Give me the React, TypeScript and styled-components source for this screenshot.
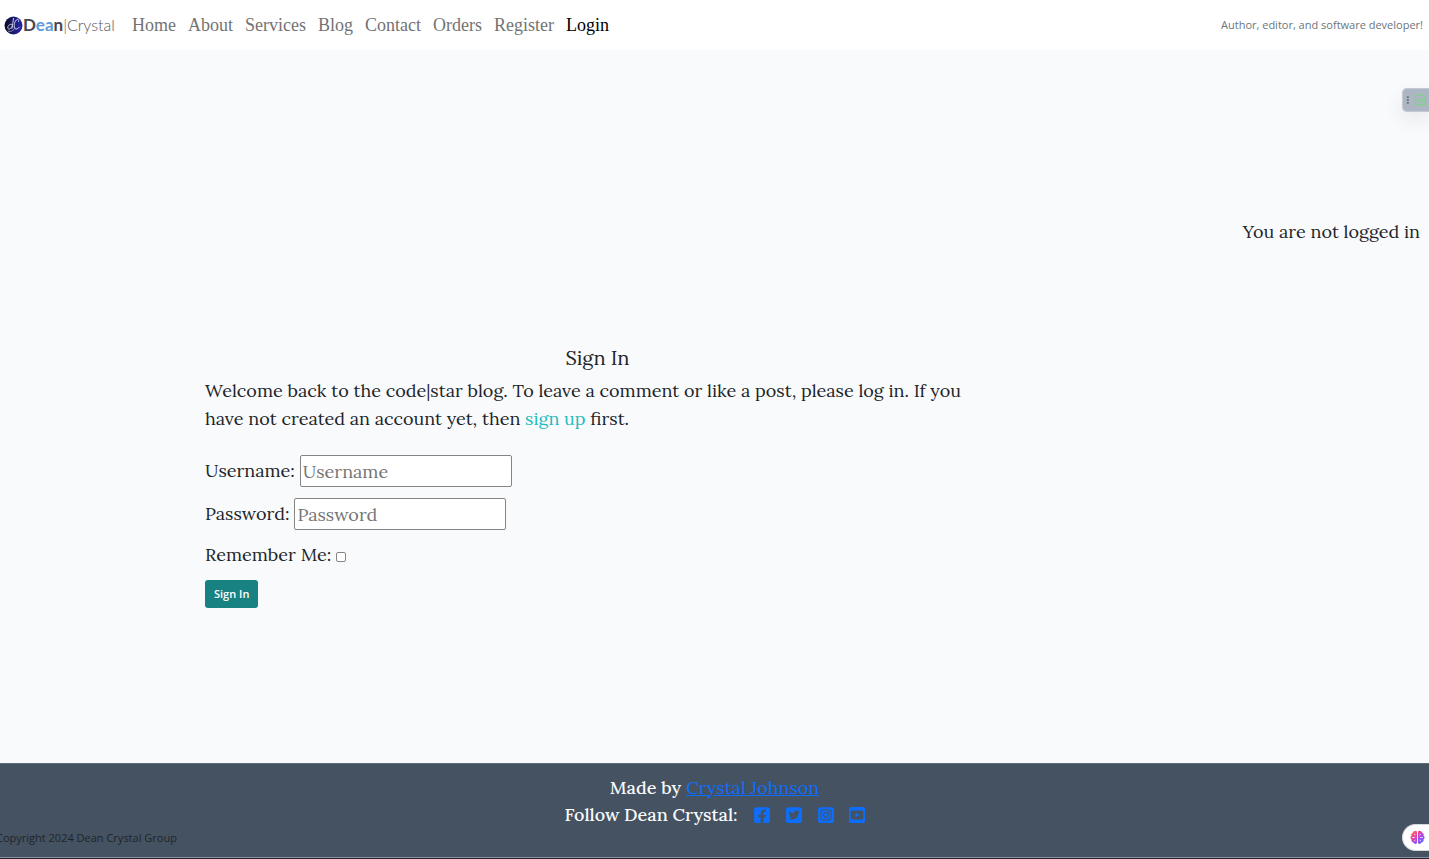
import React from "react";
import styled, { createGlobalStyle } from "styled-components";
import {
  FaFacebookSquare,
  FaTwitterSquare,
  FaInstagramSquare,
} from "react-icons/fa";

const serif = `Lora, "Liberation Serif", serif`;
const sans = `"Segoe UI", "Open Sans", sans-serif`;

const GlobalStyle = createGlobalStyle`
  *, *::before, *::after { box-sizing: border-box; }
  body {
    margin: 0;
    background: #f9fafc;
    color: #212529;
    font-family: ${serif};
    font-size: 18px;
  }
`;

const Page = styled.div`
  display: flex;
  flex-direction: column;
  min-height: 100vh;
  overflow-x: hidden;
`;

const Header = styled.header`
  display: flex;
  align-items: center;
  min-height: 50px;
  padding: 0 6px 0 4px;
  background: #fff;
`;

const Brand = styled.a`
  display: flex;
  align-items: center;
  width: 128px;
  color: #45474d;
  font-family: Lato, sans-serif;
  font-size: 17px;
  font-weight: 300;
  line-height: 24px;
  text-decoration: none;
  white-space: nowrap;
`;

const BrandStrong = styled.span`
  font-weight: 700;
`;

const BrandAccent = styled.span`
  color: #5b9bd8;
`;

const BrandThin = styled.span`
  font-size: 16px;
  font-weight: 300;
  color: #55575c;
`;

const Nav = styled.nav`
  display: flex;
  gap: 12px;
  margin-right: auto;
`;

const NavLink = styled.a<{ $active?: boolean }>`
  color: ${(p) => (p.$active ? "#000" : "#737373")};
  font-family: "Liberation Serif", serif;
  font-size: 18px;
  line-height: 24px;
  text-decoration: none;
`;

const Tagline = styled.span`
  color: #6c757d;
  font-family: ${sans};
  font-size: 11px;
  line-height: 16px;
`;

const Main = styled.main`
  flex: 1;
  padding-top: 168px;
`;

const Status = styled.p`
  margin: 0 9px 0 0;
  line-height: 28px;
  text-align: right;
`;

const Container = styled.div`
  max-width: 1019px;
  margin: 98px auto 0;
`;

const SignInPanel = styled.section`
  max-width: 785px;
`;

const Title = styled.h1`
  margin: 0 0 5px;
  font-size: 20px;
  font-weight: 400;
  line-height: 28px;
  text-align: center;
`;

const Intro = styled.p`
  margin: 0 0 22px;
  line-height: 28px;
`;

const TextLink = styled.a`
  color: #23bbbb;
  text-decoration: none;
`;

const Field = styled.div`
  display: flex;
  align-items: center;
  gap: 5px;
  margin-bottom: 11px;
  line-height: 28px;
`;

const TextInput = styled.input`
  width: 212px;
  height: 32px;
  padding: 1px 2px;
  border: 1px solid #858585;
  border-radius: 2px;
  background: #fff;
  color: #212529;
  font: inherit;
  &::placeholder {
    color: #757575;
    opacity: 1;
  }
`;

const Checkbox = styled.input`
  appearance: none;
  width: 10px;
  height: 10px;
  margin: 3px 0 0;
  border: 1px solid #858585;
  border-radius: 2px;
  background: #fff;
  &:checked {
    background: #188181;
  }
`;

const SubmitButton = styled.button`
  display: block;
  height: 28px;
  padding: 0 9px;
  border: 0;
  border-radius: 3px;
  background: #188181;
  color: #fff;
  font-family: ${sans};
  font-size: 11px;
  font-weight: 600;
  line-height: 16px;
`;

const Footer = styled.footer`
  min-height: 96px;
  padding-top: 10px;
  border-top: 1px solid #5f6b79;
  border-bottom: 1px solid #231f2b;
  box-shadow: inset 0 -1px #8c959f;
  background: #445261;
`;

const FooterLine = styled.div`
  display: flex;
  justify-content: center;
  align-items: center;
  gap: 5px;
  color: #f9fafc;
  line-height: 27px;
`;

const FooterLabel = styled.span`
  font-weight: 500;
`;

const BlueLink = styled.a`
  color: #0d6efd;
`;

const SocialLinks = styled.div`
  display: flex;
  gap: 14px;
  margin-left: 10px;
`;

const SocialLink = styled.a`
  display: flex;
  color: #0d6efd;
  font-size: 18px;
`;

const Copyright = styled.p`
  margin: 2px 0 0 -4px;
  font-family: ${sans};
  font-size: 11px;
  line-height: 16px;
`;

const SideTool = styled.button`
  position: absolute;
  top: 88px;
  right: 0;
  display: flex;
  align-items: center;
  width: 27px;
  height: 24px;
  padding: 0;
  overflow: hidden;
  border: 1px solid #c3cad3;
  border-right: 0;
  border-radius: 5px 0 0 5px;
  background: #adb7c4;
  box-shadow: 0 8px 20px rgba(0, 0, 0, 0.08);
`;

const BrainButton = styled.button`
  position: fixed;
  right: 0;
  bottom: 8px;
  display: flex;
  align-items: center;
  width: 27px;
  height: 27px;
  padding: 0 0 0 7px;
  border: 1px solid #d5d9de;
  border-right: 0;
  border-radius: 14px 0 0 14px;
  background: #fff;
`;

const LogoMark = () => (
  <svg width="19" height="19" viewBox="0 0 19 19" aria-hidden="true">
    <defs>
      <linearGradient id="orb" x1="0" x2="1">
        <stop offset="0" stopColor="#080818" />
        <stop offset="0.5" stopColor="#1c1c78" />
        <stop offset="1" stopColor="#2626a8" />
      </linearGradient>
    </defs>
    <circle cx="9.5" cy="9.5" r="9" fill="url(#orb)" />
    <g fill="none" stroke="#d9dcef" strokeWidth="0.9" strokeLinecap="round">
      <path d="M9.5 2.5C9 6 8.500 9.500 8 12.500M8.300 8.500C5.500 7.500 3.500 10 3.800 12C4.200 14 7 13 8 10.500" />
      <path d="M14.500 5.500C15.500 3 13 2.500 11.500 5C9.800 8 9.500 12.500 11.800 13C13.500 13.200 14.500 12 15.500 11" />
      <path d="M4 15C7 16.500 10 14 11 12" strokeWidth="0.6" />
    </g>
  </svg>
);

const CheckTool = () => (
  <svg width="27" height="22" viewBox="0 0 27 22" aria-hidden="true">
    <g fill="#72777f">
      <rect x="4" y="7" width="2" height="2" />
      <rect x="4" y="10" width="2" height="2" />
      <rect x="4" y="13" width="2" height="2" />
    </g>
    <g fill="none" stroke="#7bd383" strokeWidth="1.400" strokeLinecap="round" strokeLinejoin="round">
      <path d="M20 6H14.500Q13 6 13 7.500V14.500Q13 16 14.500 16H21.500Q23 16 23 14.500V11" />
      <path d="M16 10.500L18.500 13L24 7" />
    </g>
  </svg>
);

const YoutubeSquare = () => (
  <svg width="16" height="18" viewBox="0 0 16 18" aria-hidden="true">
    <path
      fill="currentColor"
      fillRule="evenodd"
      d="M2 1H14Q16 1 16 3V15Q16 17 14 17H2Q0 17 0 15V3Q0 1 2 1ZM3 4.500Q1.700 4.500 1.700 6V12Q1.700 13.500 3 13.500H13Q14.300 13.500 14.300 12V6Q14.300 4.500 13 4.500ZM6.500 6.700L10.500 9L6.500 11.300Z"
    />
  </svg>
);

const Brain = () => (
  <svg width="15" height="15" viewBox="0 0 15 15" aria-hidden="true">
    <defs>
      <linearGradient id="brain" x1="0" y1="0" x2="1" y2="1">
        <stop offset="0" stopColor="#ff8a1f" />
        <stop offset="0.350" stopColor="#ee3fa0" />
        <stop offset="0.650" stopColor="#9a4df4" />
        <stop offset="1" stopColor="#3f7bff" />
      </linearGradient>
    </defs>
    <path
      fill="url(#brain)"
      d="M7 1.500C5.500 0 3.500 1 3 2.500C1.500 2.800 1 4.500 1.500 5.500C0 6.500 0 8.500 1.500 9.500C1 11.500 2.500 12.500 3.500 12.500C4 14 6 14.500 7 13ZM8 1.500C9.500 0 11.500 1 12 2.500C13.500 2.800 14 4.500 13.500 5.500C15 6.500 15 8.500 13.500 9.500C14 11.500 12.500 12.500 11.500 12.500C11 14 9 14.500 8 13Z"
    />
    <path
      d="M2 7.500H5M10 7.500H13M4 4L5.500 5M11 4L9.500 5M4 11L5.500 10M11 11L9.500 10"
      stroke="#fff"
      strokeWidth="0.700"
      fill="none"
    />
  </svg>
);

const links = ["Home", "About", "Services", "Blog", "Contact", "Orders", "Register", "Login"];

const socials = [
  { label: "Facebook", icon: <FaFacebookSquare /> },
  { label: "Twitter", icon: <FaTwitterSquare /> },
  { label: "Instagram", icon: <FaInstagramSquare /> },
  { label: "YouTube", icon: <YoutubeSquare /> },
];

export default function App() {
  return (
    <Page>
      <GlobalStyle />
      <Header>
        <Brand href="#">
          <LogoMark />
          <BrandStrong>
            D<BrandAccent>ea</BrandAccent>n
          </BrandStrong>
          <BrandThin>|Crystal</BrandThin>
        </Brand>
        <Nav>
          {links.map((name) => (
            <NavLink key={name} href="#" $active={name === "Login"}>
              {name}
            </NavLink>
          ))}
        </Nav>
        <Tagline>Author, editor, and software developer!</Tagline>
      </Header>

      <Main>
        <Status>You are not logged in</Status>
        <Container>
          <SignInPanel>
            <Title>Sign In</Title>
            <Intro>
              Welcome back to the code|star blog. To leave a comment or like a post, please log in. If you have not
              created an account yet, then <TextLink href="#">sign up</TextLink> first.
            </Intro>
            <form onSubmit={(e) => e.preventDefault()}>
              <Field>
                <label htmlFor="username">Username:</label>
                <TextInput id="username" type="text" placeholder="Username" />
              </Field>
              <Field>
                <label htmlFor="password">Password:</label>
                <TextInput id="password" type="password" placeholder="Password" />
              </Field>
              <Field>
                <label htmlFor="remember">Remember Me:</label>
                <Checkbox id="remember" type="checkbox" />
              </Field>
              <SubmitButton type="submit">Sign In</SubmitButton>
            </form>
          </SignInPanel>
        </Container>
      </Main>

      <Footer>
        <FooterLine>
          <FooterLabel>Made by</FooterLabel>
          <BlueLink href="#">Crystal Johnson</BlueLink>
        </FooterLine>
        <FooterLine>
          <FooterLabel>Follow Dean Crystal:</FooterLabel>
          <SocialLinks>
            {socials.map(({ label, icon }) => (
              <SocialLink key={label} href="#" aria-label={label}>
                {icon}
              </SocialLink>
            ))}
          </SocialLinks>
        </FooterLine>
        <Copyright>Copyright 2024 Dean Crystal Group</Copyright>
      </Footer>

      <SideTool type="button" aria-label="Open tools">
        <CheckTool />
      </SideTool>
      <BrainButton type="button" aria-label="Open assistant">
        <Brain />
      </BrainButton>
    </Page>
  );
}
